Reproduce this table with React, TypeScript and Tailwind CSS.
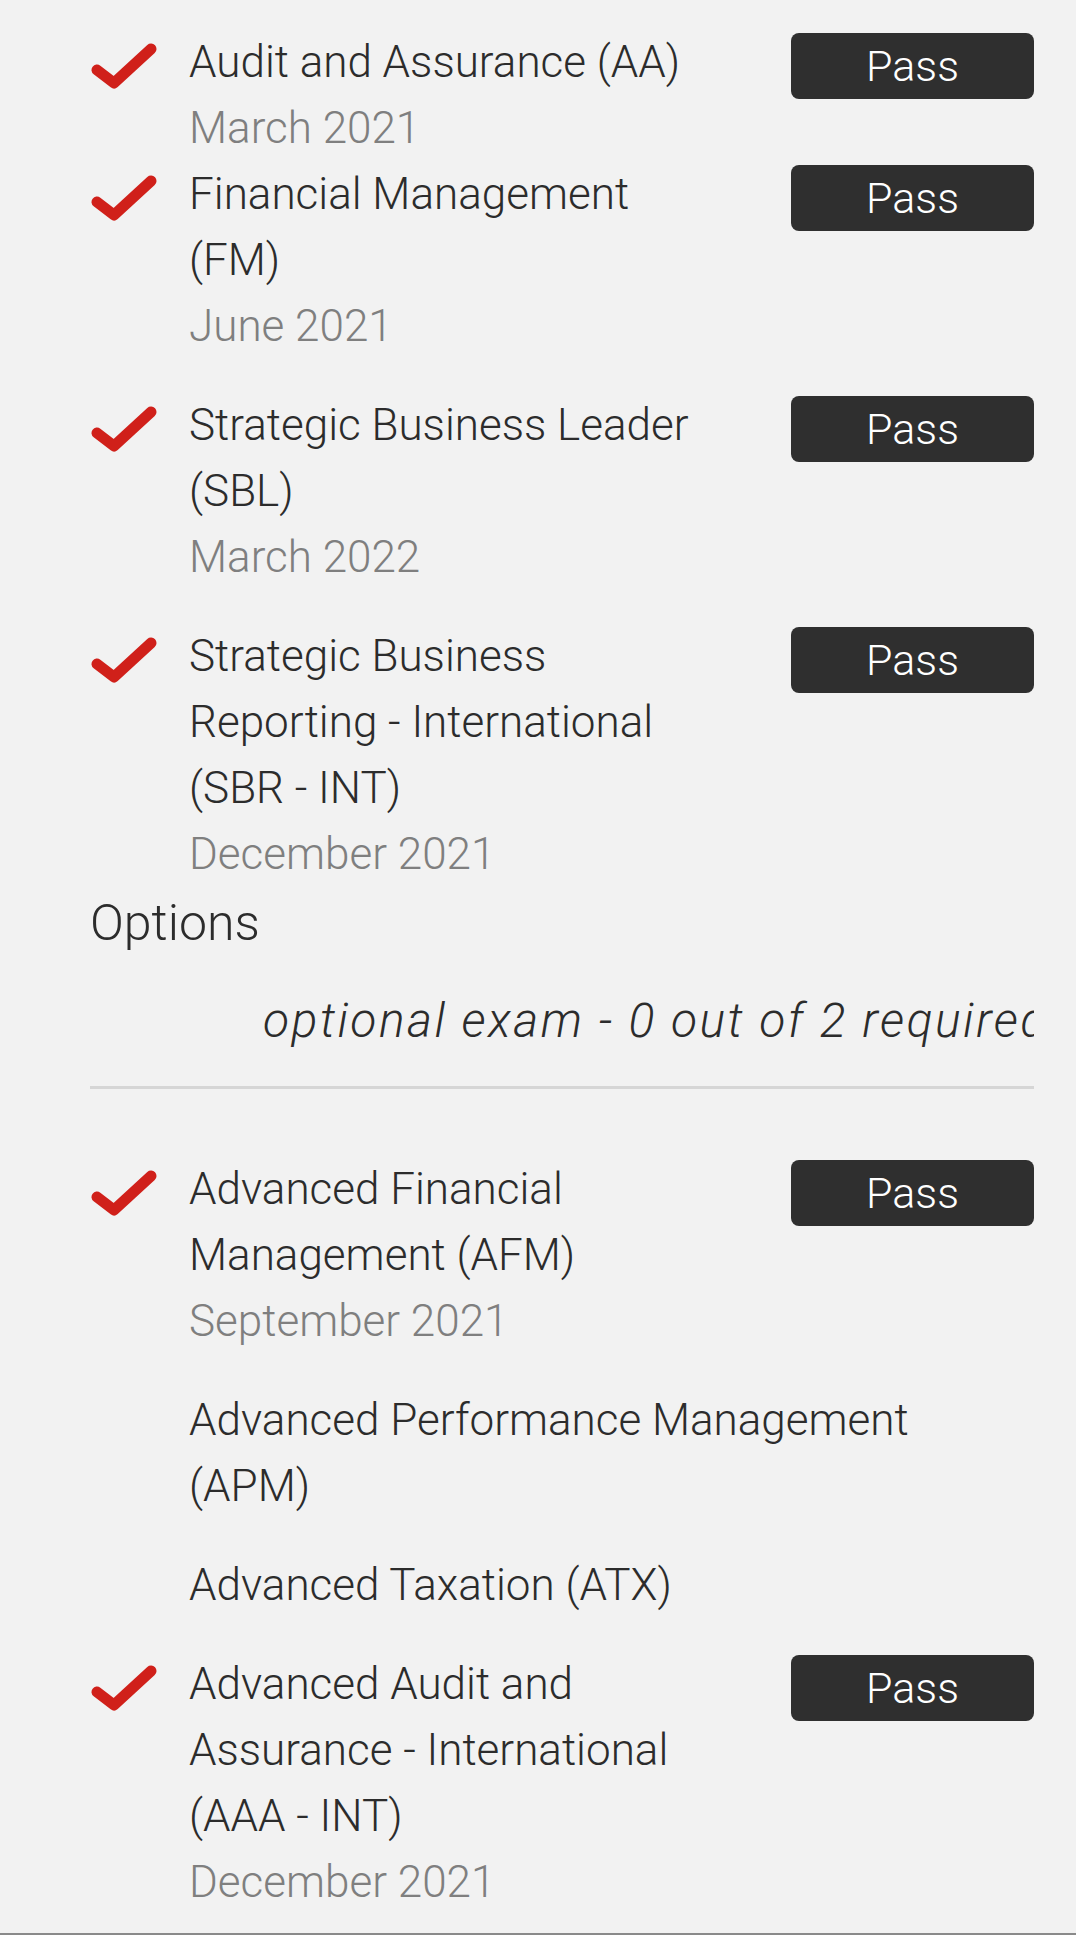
import React from "react";

type Exam = {
  title: string;
  date?: string;
  passed?: boolean;
  gap?: string;
};

const core: Exam[] = [
  { title: "Audit and Assurance (AA)", date: "March 2021", passed: true },
  { title: "Financial Management (FM)", date: "June 2021", passed: true },
  {
    title: "Strategic Business Leader (SBL)",
    date: "March 2022",
    passed: true,
    gap: "mt-[33px]",
  },
  {
    title: "Strategic Business Reporting - International (SBR - INT)",
    date: "December 2021",
    passed: true,
    gap: "mt-[33px]",
  },
];

const options: Exam[] = [
  {
    title: "Advanced Financial Management (AFM)",
    date: "September 2021",
    passed: true,
  },
  { title: "Advanced Performance Management (APM)", gap: "mt-[33px]" },
  { title: "Advanced Taxation (ATX)", gap: "mt-[33px]" },
  {
    title: "Advanced Audit and Assurance - International (AAA - INT)",
    date: "December 2021",
    passed: true,
    gap: "mt-[33px]",
  },
];

function Check() {
  return (
    <svg
      viewBox="0 0 68 48"
      className="mt-[14px] h-[48px] w-[68px]"
      fill="none"
      stroke="#d0201a"
      strokeWidth={11}
      strokeLinecap="round"
      strokeLinejoin="round"
    >
      <path d="M7 27 L24 40 L61 6" />
    </svg>
  );
}

function ExamRow({ exam }: { exam: Exam }) {
  return (
    <div className={`flex items-start ${exam.gap ?? ""}`}>
      <div className="w-[99px] shrink-0">{exam.passed && <Check />}</div>
      <div className={exam.passed ? "w-[525px]" : "flex-1"}>
        <p className="text-[#2c2c2c]">{exam.title}</p>
        {exam.date && <p className="text-[#7f7f7f]">{exam.date}</p>}
      </div>
      {exam.passed && (
        <div className="ml-auto mt-[4px] flex h-[66px] w-[243px] shrink-0 items-center justify-center rounded-[8px] bg-[#2f2f2f] text-[43px] leading-none text-white">
          Pass
        </div>
      )}
    </div>
  );
}

export default function App() {
  return (
    <div className="h-[1935px] overflow-hidden border-b-[2px] border-[#8a8a8a] bg-[#f2f2f2] font-['Roboto','Liberation_Sans',sans-serif] font-light">
      <div className="pl-[90px] pr-[42px] pt-[29px] text-[44px] leading-[66px]">
        {core.map((exam) => (
          <ExamRow key={exam.title} exam={exam} />
        ))}

        <h2 className="text-[50px] leading-[72px] text-[#2c2c2c]">Options</h2>

        <p className="mt-[26px] overflow-hidden whitespace-nowrap pl-[173px] text-[48px] italic leading-[72px] tracking-[2.5px] text-[#2c2c2c]">
          optional exam - 0 out of 2 required
        </p>

        <div className="mt-[29px] h-[3px] bg-[#d6d6d6]" />

        <div className="mt-[67px]">
          {options.map((exam) => (
            <ExamRow key={exam.title} exam={exam} />
          ))}
        </div>
      </div>
    </div>
  );
}
